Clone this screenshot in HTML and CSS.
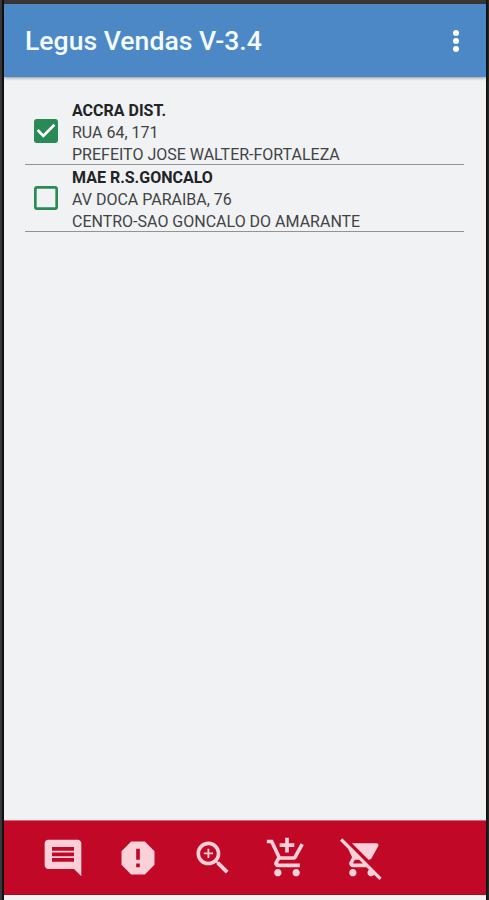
FILE: index.html
```
<!DOCTYPE html>
<html lang="pt-BR">
<head>
    <meta charset="utf-8">
    <title>Legus Vendas</title>
    <link rel="stylesheet" href="styles.css">
</head>
<body>
    <div class="app">
        <header class="topbar">
            <h1 class="title">Legus Vendas V-3.4</h1>
            <svg class="more" viewBox="0 0 8 24">
                <circle cx="4" cy="4" r="3"/>
                <circle cx="4" cy="12" r="3"/>
                <circle cx="4" cy="20" r="3"/>
            </svg>
        </header>

        <main class="list">
            <div class="item">
                <svg class="check" viewBox="3 3 18 18">
                    <path d="M19 3H5c-1.11 0-2 .9-2 2v14c0 1.1.89 2 2 2h14c1.11 0 2-.9 2-2V5c0-1.1-.89-2-2-2z"/>
                    <path class="tick" d="M10 17l-5-5 1.41-1.41L10 14.17l7.59-7.59L19 8l-9 9z"/>
                </svg>
                <div class="info">
                    <p class="name">ACCRA DIST.</p>
                    <p>RUA 64, 171</p>
                    <p>PREFEITO JOSE WALTER-FORTALEZA</p>
                </div>
            </div>
            <div class="item">
                <svg class="check" viewBox="3 3 18 18">
                    <path d="M19 5v14H5V5h14m0-2H5c-1.1 0-2 .9-2 2v14c0 1.1.9 2 2 2h14c1.1 0 2-.9 2-2V5c0-1.1-.9-2-2-2z"/>
                </svg>
                <div class="info">
                    <p class="name">MAE R.S.GONCALO</p>
                    <p>AV DOCA PARAIBA, 76</p>
                    <p>CENTRO-SAO GONCALO DO AMARANTE</p>
                </div>
            </div>
        </main>

        <nav class="actions">
            <svg class="icon" viewBox="0 0 24 24">
                <path d="M21.99 4c0-1.1-.89-2-1.99-2H4c-1.1 0-2 .9-2 2v12c0 1.1.9 2 2 2h14l4 4-.01-18zM18 14H6v-2h12v2zm0-3H6V9h12v2zm0-3H6V6h12v2z"/>
            </svg>
            <svg class="icon" viewBox="0 0 24 24">
                <path d="M15.73 3H8.27L3 8.27v7.46L8.27 21h7.46L21 15.73V8.27L15.73 3zM13 17h-2v-2h2v2zm0-4h-2V7h2v6z"/>
            </svg>
            <svg class="icon" viewBox="0 0 24 24">
                <path d="M15.5 14h-.79l-.28-.27C15.41 12.59 16 11.11 16 9.5 16 5.91 13.09 3 9.5 3S3 5.91 3 9.5 5.91 16 9.5 16c1.61 0 3.09-.59 4.23-1.57l.27.28v.79l5 4.99L20.49 19l-4.99-5zm-6 0C7.01 14 5 11.99 5 9.5S7.01 5 9.5 5 14 7.01 14 9.5 11.99 14 9.5 14z"/>
                <path d="M12 10h-2v2H9v-2H7V9h2V7h1v2h2v1z"/>
            </svg>
            <svg class="icon" viewBox="0 0 24 24">
                <path d="M11 9h2V6h3V4h-3V1h-2v3H8v2h3v3zm-4 9c-1.1 0-1.99.9-1.99 2S5.9 22 7 22s2-.9 2-2-.9-2-2-2zm10 0c-1.1 0-1.99.9-1.99 2s.89 2 1.99 2 2-.9 2-2-.9-2-2-2zm-9.83-3.25l.03-.12.9-1.63h7.45c.75 0 1.41-.41 1.75-1.03l3.86-7.01L19.42 4h-.01l-1.1 2-2.76 5H8.53l-.13-.27L6.16 6l-.95-2-.94-2H1v2h2l3.6 7.59-1.35 2.45c-.16.28-.25.61-.25.96 0 1.1.9 2 2 2h12v-2H7.42c-.13 0-.25-.11-.25-.25z"/>
            </svg>
            <svg class="icon" viewBox="0 0 24 24">
                <path d="M22.73 22.73L2.77 2.77 2 2l-.73-.73L0 2.54l4.39 4.39 2.21 4.66-1.35 2.45c-.16.28-.25.61-.25.96 0 1.1.9 2 2 2h7.46l1.38 1.38c-.5.36-.83.95-.83 1.62 0 1.1.89 2 1.99 2 .67 0 1.26-.33 1.62-.84L21.46 24l1.27-1.27zM7.42 15c-.14 0-.25-.11-.25-.25l.03-.12.9-1.63h2.36l2 2H7.42zm8.13-2c.75 0 1.41-.41 1.75-1.03l3.58-6.49c.08-.14.12-.31.12-.48 0-.55-.45-1-1-1H6.54l9.01 9zM7 18c-1.1 0-1.99.9-1.99 2S5.9 22 7 22s2-.9 2-2-.9-2-2-2z"/>
            </svg>
        </nav>
    </div>
</body>
</html>
```
FILE: styles.css
```
* {
    box-sizing: border-box;
}

body {
    margin: 0;
    height: 900px;
    padding: 4px 3px 0 4px;
    background: linear-gradient(90deg, #383838 0, #383838 2px, #101010 2px, #101010 487px, #222624 488px);
    font-family: Roboto, sans-serif;
    overflow: hidden;
}

.app {
    display: flex;
    flex-direction: column;
    height: 896px;
    padding-bottom: 5px;
    background: #f0f2f4;
    box-shadow: 0 -4px 0 #383734;
}

.topbar {
    display: flex;
    align-items: center;
    justify-content: space-between;
    height: 73px;
    padding: 1px 26px 0 21px;
    background: #4c88c6;
    box-shadow: 0 1px 3px rgba(0, 0, 0, 0.4);
}

.title {
    margin: 0;
    padding-bottom: 2px;
    color: #f4fbff;
    font-size: 26.6px;
    font-weight: 500;
}

.more {
    width: 8px;
    height: 24px;
    fill: #fff;
}

.list {
    flex: 1;
    padding: 21px 22px 0 21px;
}

.item {
    display: flex;
    align-items: center;
    height: 67px;
    padding-left: 9px;
    border-bottom: 1px solid #929395;
}

.check {
    width: 24px;
    height: 24px;
    margin-right: 14px;
    fill: #2a8a55;
}

.tick {
    fill: #fff;
}

.info {
    padding-top: 4px;
}

.info p {
    margin: 0;
    color: #424345;
    font-size: 16px;
    line-height: 22px;
    white-space: nowrap;
}

.info .name {
    color: #222325;
    font-weight: 700;
}

.actions {
    display: flex;
    align-items: center;
    gap: 30.8px;
    height: 75px;
    padding-left: 37px;
    background: #c10826;
    border-top: 1px solid #d86a7b;
    border-bottom: 1px solid #a80a20;
}

.icon {
    width: 44px;
    height: 44px;
    fill: #fbd0d9;
}
```
